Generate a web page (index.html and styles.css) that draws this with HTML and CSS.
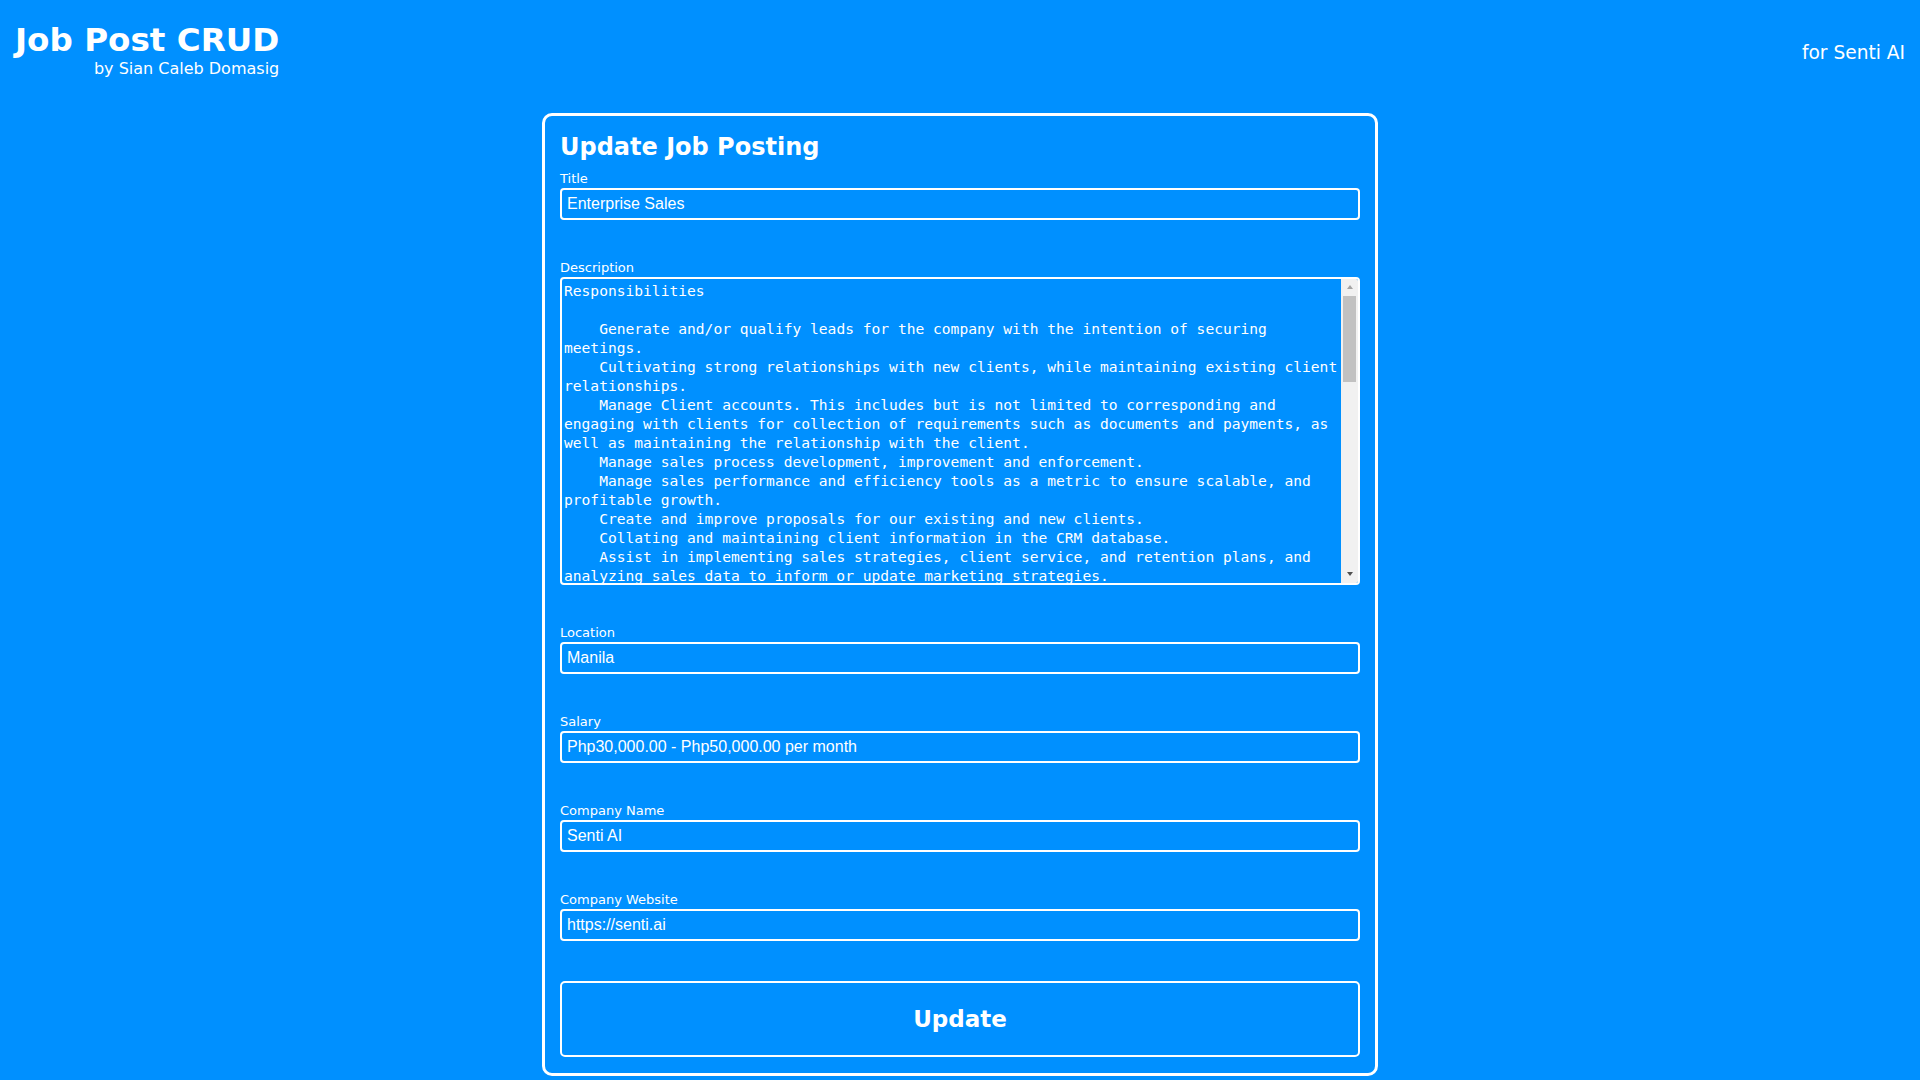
FILE: index.html
```html
<!DOCTYPE html>
<html lang="en">
<head>
<meta charset="utf-8">
<title>Job Post CRUD</title>
<link rel="stylesheet" href="styles.css">
</head>
<body>
<header class="topbar">
  <div class="brand">
    <h1 class="brand-title">Job Post CRUD</h1>
    <div class="brand-sub">by Sian Caleb Domasig</div>
  </div>
  <div class="for-client">for Senti AI</div>
</header>
<main class="card">
  <h2 class="card-title">Update Job Posting</h2>
  <form class="form">
    <div class="field">
      <label class="field-label">Title</label>
      <input class="field-input" type="text" value="Enterprise Sales">
    </div>
    <div class="field">
      <label class="field-label">Description</label>
      <div class="textarea-box">
        <textarea class="field-textarea">Responsibilities

    Generate and/or qualify leads for the company with the intention of securing meetings.
    Cultivating strong relationships with new clients, while maintaining existing client relationships.
    Manage Client accounts. This includes but is not limited to corresponding and engaging with clients for collection of requirements such as documents and payments, as well as maintaining the relationship with the client.
    Manage sales process development, improvement and enforcement.
    Manage sales performance and efficiency tools as a metric to ensure scalable, and profitable growth.
    Create and improve proposals for our existing and new clients.
    Collating and maintaining client information in the CRM database.
    Assist in implementing sales strategies, client service, and retention plans, and analyzing sales data to inform or update marketing strategies.
    Prepare and maintain weekly and monthly sales reports and forecasts.
    Perform other related tasks as may be assigned from time to time.

Qualifications

    Bachelor's degree in Business Administration, Marketing, or any related field.
    At least 2 years of experience in B2B sales, business development, or account management.
    Proven track record of meeting and exceeding sales targets.
    Excellent written and verbal communication skills in English.
    Strong negotiation, presentation, and interpersonal skills.
    Experience with CRM software is an advantage.
    Self-motivated, organized, and able to work independently with minimal supervision.
    Willing to work in Manila.

Benefits

    Competitive salary and performance-based incentives.
    HMO coverage upon regularization.
    Paid time off and government-mandated benefits.
    Opportunities for career growth in a fast-growing AI company.
    Friendly and collaborative work environment.

How to Apply

    Send your resume and a short cover letter through the company website.
    Only shortlisted candidates will be contacted for an interview.
</textarea>
        <div class="scrollbar" aria-hidden="true">
          <div class="scroll-btn"><span class="arrow-up"></span></div>
          <div class="scroll-track"><div class="scroll-thumb"></div></div>
          <div class="scroll-btn"><span class="arrow-down"></span></div>
        </div>
      </div>
    </div>
    <div class="field">
      <label class="field-label">Location</label>
      <input class="field-input" type="text" value="Manila">
    </div>
    <div class="field">
      <label class="field-label">Salary</label>
      <input class="field-input" type="text" value="Php30,000.00 - Php50,000.00 per month">
    </div>
    <div class="field">
      <label class="field-label">Company Name</label>
      <input class="field-input" type="text" value="Senti AI">
    </div>
    <div class="field">
      <label class="field-label">Company Website</label>
      <input class="field-input" type="text" value="https://senti.ai">
    </div>
    <button class="submit-btn" type="button">Update</button>
  </form>
</main>
</body>
</html>
```
FILE: styles.css
```css
html, body {
  margin: 0;
  padding: 0;
}

body {
  background: #0090ff;
  color: #ffffff;
  font-family: "DejaVu Sans", Verdana, sans-serif;
  min-height: 100vh;
  overflow: hidden;
}

.topbar {
  display: flex;
  justify-content: space-between;
  align-items: center;
  padding: 21px 15px 0 15px;
}

.brand {
  display: flex;
  flex-direction: column;
  align-items: flex-end;
}

.brand-title {
  margin: 0;
  font-size: 32.6px;
  font-weight: bold;
  line-height: normal;
}

.brand-sub {
  font-size: 16px;
  line-height: normal;
}

.for-client {
  font-size: 18.6px;
  margin-top: 5px;
}

.card {
  display: block;
  width: 800px;
  margin: 35px auto 0 auto;
  padding: 15px 15px 16px 15px;
  border: 3px solid #ffffff;
  border-radius: 10px;
}

.card-title {
  margin: 1.5px 0 10px 0;
  font-size: 24px;
  font-weight: bold;
  line-height: normal;
}

.form {
  margin: 0;
}

.field {
  margin-bottom: 40px;
}

.field-label {
  display: block;
  font-size: 13px;
  line-height: normal;
  margin-bottom: 2px;
}

.field-input {
  display: block;
  box-sizing: border-box;
  width: 100%;
  height: 32px;
  margin: 0;
  padding: 0 5px;
  border: 2px solid #ffffff;
  border-radius: 4px;
  background: transparent;
  color: #ffffff;
  font-family: "Liberation Sans", Arial, sans-serif;
  font-size: 16px;
  outline: none;
}

.textarea-box {
  display: flex;
  box-sizing: border-box;
  height: 308px;
  margin-bottom: 2px;
  border: 2px solid #ffffff;
  border-radius: 4px;
  overflow: hidden;
}

.field-textarea {
  flex: 1;
  min-width: 0;
  box-sizing: border-box;
  height: 100%;
  margin: 0;
  padding: 2px;
  border: none;
  background: transparent;
  color: #ffffff;
  font-family: "DejaVu Sans Mono", Consolas, monospace;
  font-size: 14.6px;
  line-height: 19px;
  resize: none;
  overflow: hidden;
  white-space: pre-wrap;
  outline: none;
}

.scrollbar {
  display: flex;
  flex-direction: column;
  width: 17px;
  flex: none;
  background: #f1f1f1;
}

.scroll-btn {
  display: flex;
  align-items: center;
  justify-content: center;
  height: 17px;
  flex: none;
}

.arrow-up {
  width: 0;
  height: 0;
  border-left: 3.5px solid transparent;
  border-right: 3.5px solid transparent;
  border-bottom: 4px solid #a3a3a3;
}

.arrow-down {
  width: 0;
  height: 0;
  border-left: 3.5px solid transparent;
  border-right: 3.5px solid transparent;
  border-top: 4px solid #505050;
}

.scroll-track {
  flex: 1;
  padding: 0 2px;
}

.scroll-thumb {
  height: 86px;
  background: #c1c1c1;
}

.submit-btn {
  display: block;
  box-sizing: border-box;
  width: 100%;
  height: 76px;
  margin: 0;
  padding: 0;
  border: 2px solid #ffffff;
  border-radius: 5px;
  background: transparent;
  color: #ffffff;
  font-family: "DejaVu Sans", Verdana, sans-serif;
  font-size: 23px;
  font-weight: bold;
  cursor: pointer;
}
```
